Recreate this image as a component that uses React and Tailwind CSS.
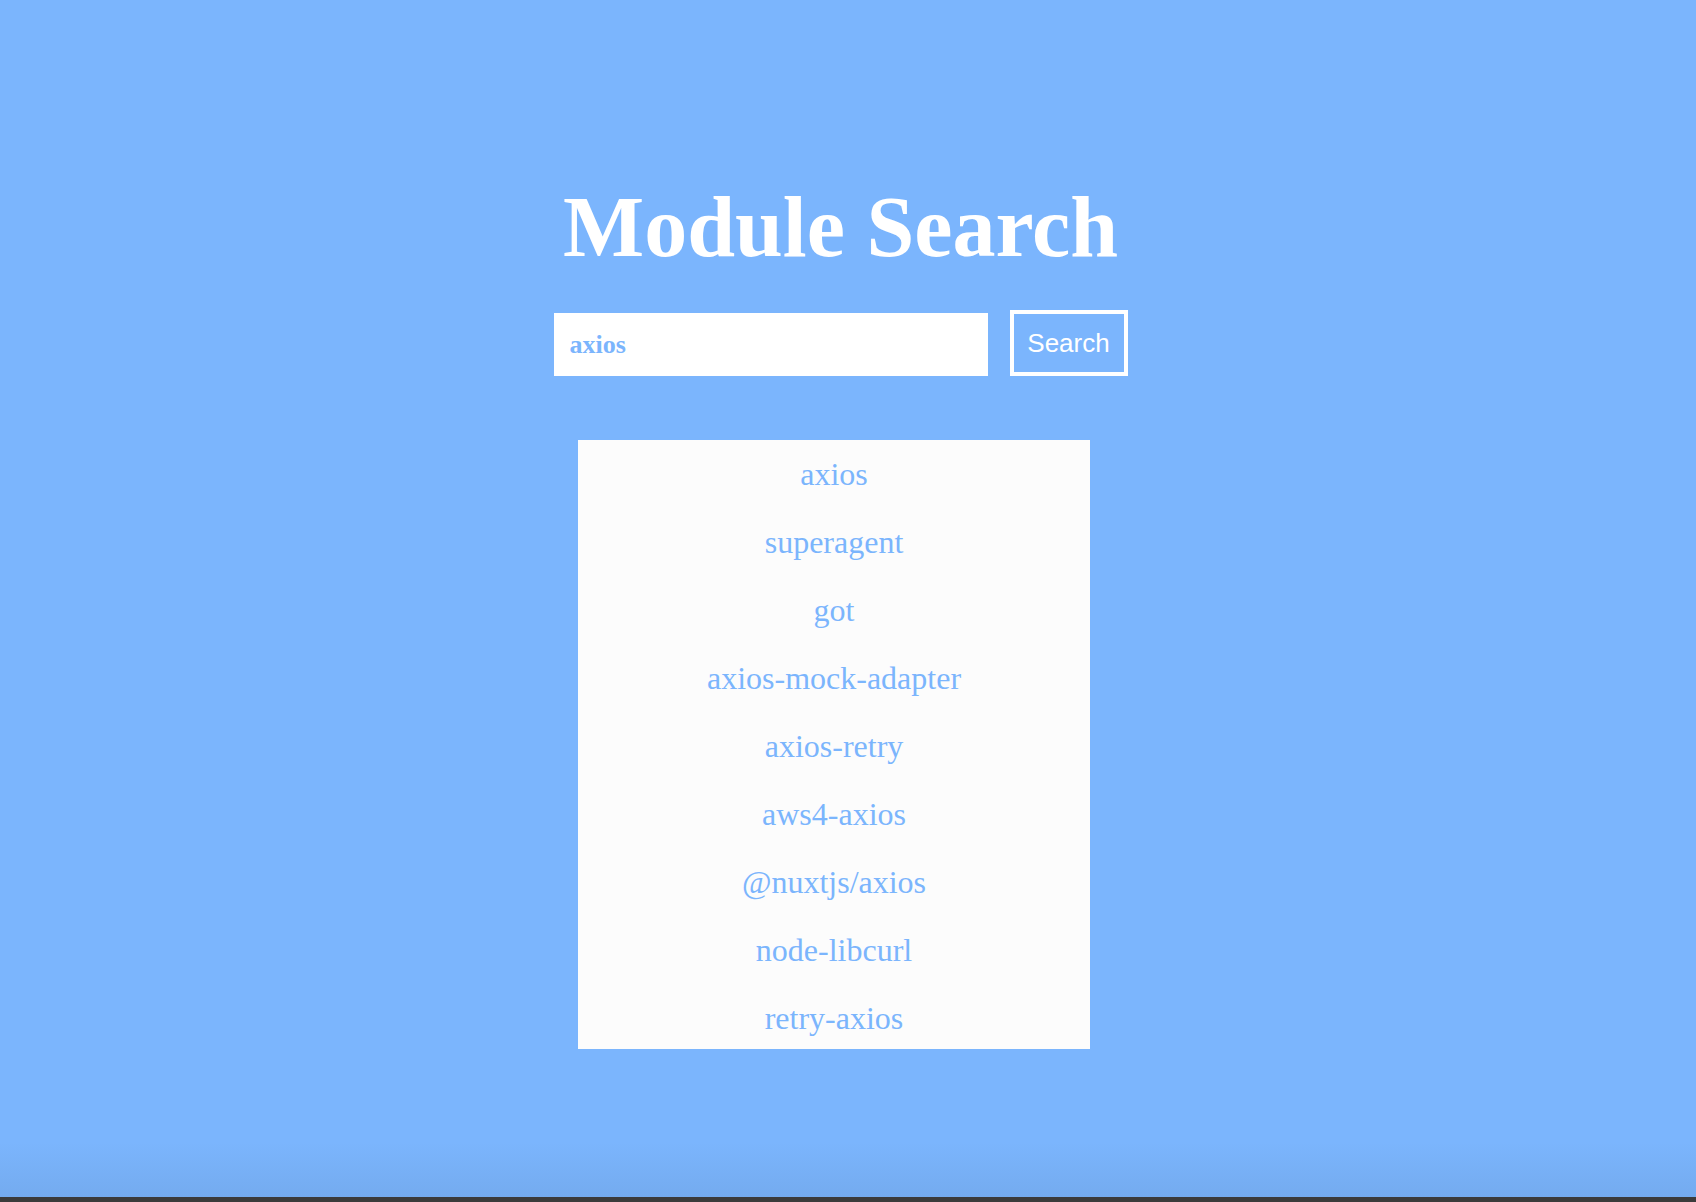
import React from "react";

const items = [
  "axios",
  "superagent",
  "got",
  "axios-mock-adapter",
  "axios-retry",
  "aws4-axios",
  "@nuxtjs/axios",
  "node-libcurl",
  "retry-axios",
];

export default function App() {
  return (
    <div className="h-[1202px] w-full bg-[#7bb5fd] flex flex-col overflow-hidden">
      <div className="flex flex-col items-center pt-[184px] pr-[15px]">
        <h1
          className="text-[86px] leading-[86px] font-bold text-white m-0"
          style={{ fontFamily: '"Liberation Serif", "Times New Roman", serif' }}
        >
          Module Search
        </h1>
        <div className="flex items-end gap-[22px] mt-[40px]">
          <input
            type="text"
            defaultValue="axios"
            className="w-[434px] h-[63px] bg-white pl-[16px] text-[26px] font-bold text-[#7bb5fd] outline-none border-0"
            style={{ fontFamily: '"Liberation Serif", "Times New Roman", serif' }}
          />
          <button
            className="h-[66px] w-[118px] border-4 border-white bg-transparent text-white text-[26px] flex items-center justify-center"
            style={{ fontFamily: '"Liberation Sans", Arial, sans-serif' }}
          >
            Search
          </button>
        </div>
        <ul
          className="mt-[64px] mr-[13px] w-[512px] h-[609px] overflow-hidden bg-[#fcfcfc] list-none p-0"
          style={{ fontFamily: '"Liberation Serif", "Times New Roman", serif' }}
        >
          {items.map((it) => (
            <li
              key={it}
              className="h-[68px] leading-[68px] text-center text-[32px] text-[#7bb5fd]"
            >
              {it}
            </li>
          ))}
        </ul>
      </div>
      <div className="flex-1" />
      <div className="h-[55px] bg-gradient-to-b from-[#7bb5fd] to-[#74abef]" />
      <div className="h-[5px] bg-[#3b3b3b]" />
    </div>
  );
}
